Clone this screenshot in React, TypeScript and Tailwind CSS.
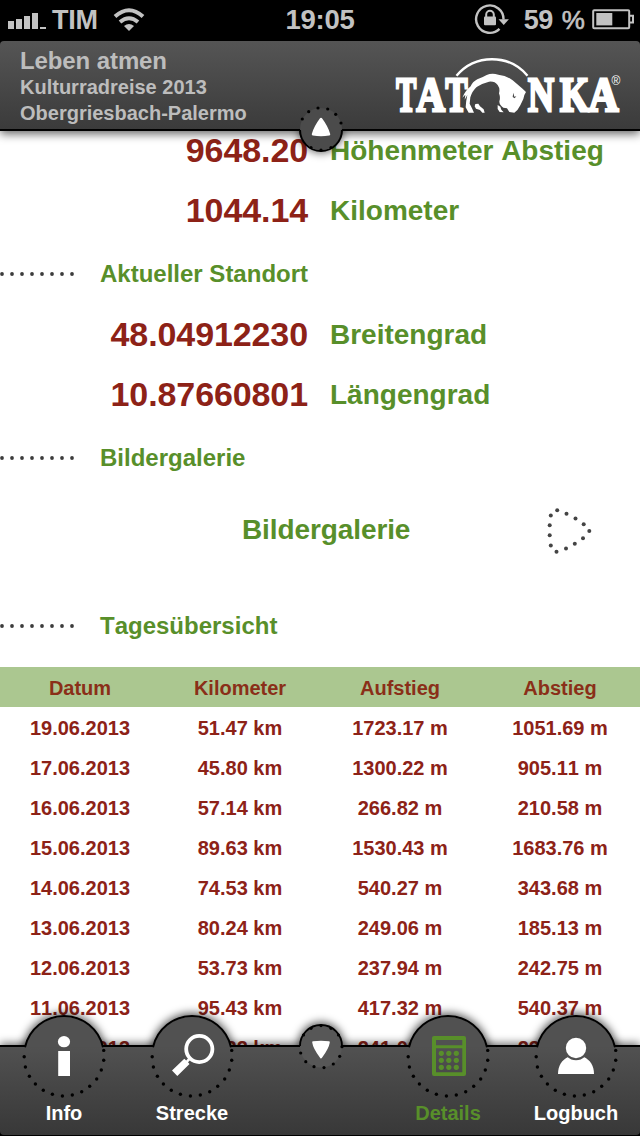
import type { ReactNode } from 'react';

interface DayEntry {
  date: string;
  distance: string;
  ascent: string;
  descent: string;
}

const days: DayEntry[] = [
  { date: '19.06.2013', distance: '51.47 km', ascent: '1723.17 m', descent: '1051.69 m' },
  { date: '17.06.2013', distance: '45.80 km', ascent: '1300.22 m', descent: '905.11 m' },
  { date: '16.06.2013', distance: '57.14 km', ascent: '266.82 m', descent: '210.58 m' },
  { date: '15.06.2013', distance: '89.63 km', ascent: '1530.43 m', descent: '1683.76 m' },
  { date: '14.06.2013', distance: '74.53 km', ascent: '540.27 m', descent: '343.68 m' },
  { date: '13.06.2013', distance: '80.24 km', ascent: '249.06 m', descent: '185.13 m' },
  { date: '12.06.2013', distance: '53.73 km', ascent: '237.94 m', descent: '242.75 m' },
  { date: '11.06.2013', distance: '95.43 km', ascent: '417.32 m', descent: '540.37 m' },
  { date: '10.06.2013', distance: '68.22 km', ascent: '241.03 m', descent: '224.68 m' },
];

type Point = [number, number];

const tabDots: Point[] = [
  [24.2, 51.7], [25.4, 62], [29.4, 71.3], [35.4, 79], [43.3, 85.3], [52.4, 89.3], [62.4, 91],
  [72.3, 90], [81.7, 86.7], [89.7, 81.3], [96.7, 74], [101.3, 65], [103.7, 55.3], [103.7, 45.4],
];

const downDots: Point[] = [
  [44.7, 48], [49.8, 56.7], [58, 61.7], [68, 62.6], [77.3, 59], [83.7, 51.3], [86, 41.7],
  [65, 20.6], [55, 23.3], [47.5, 30], [75, 23.3], [82.5, 30],
];

const upDots: Point[] = [
  [14.3, 22], [20.7, 14.7], [30, 11], [39.7, 12], [47.7, 17.3], [53, 26], [33, 53], [23, 50.6], [43, 50.6],
];

const arrowDots: Point[] = [
  [10.2, 5.2], [3.8, 10.5], [19.5, 8.8], [28.5, 13.5], [36.7, 19.2], [42.3, 25.9], [36, 33.3],
  [27.8, 38.7], [19, 43.4], [9.5, 46.7], [3.8, 40.4], [2.7, 30.3], [2.7, 20.3],
];

function Dots({ points, r, fill = '#000' }: { points: Point[]; r: number; fill?: string }) {
  return (
    <g fill={fill}>
      {points.map(([x, y]) => (
        <circle key={`${x}-${y}`} cx={x} cy={y} r={r} />
      ))}
    </g>
  );
}

function StatusBar() {
  return (
    <div className="grid h-[41px] shrink-0 grid-cols-3 items-center bg-black pb-px text-[28px] leading-none font-bold text-[#c2c2c2]">
      <div className="flex items-center pl-2">
        <svg className="h-[38px] w-[38px]" viewBox="8 1 38 38" fill="currentColor">
          <path d="M8 21h6v8H8zM16 19h6v10h-6zM24 16h6v13h-6zM32 13h6v16h-6zM40 27h6v2h-6z" />
        </svg>
        <span className="ml-[6px] text-[27px] tracking-[-0.3px]">TIM</span>
        <svg className="ml-[15px] h-[38px] w-[32px]" viewBox="114 1 32 38" fill="none" stroke="currentColor" strokeWidth="4">
          <path d="M116 16.5Q130 4 144 16.5" />
          <path d="M121 22Q130 14.5 139 22" />
          <path d="M125 26Q130 22 135 26L130 31Z" fill="currentColor" stroke="none" />
        </svg>
      </div>
      <div className="text-center text-[27.5px] tracking-[-0.3px]">19:05</div>
      <div className="flex items-center justify-end pr-[6px]">
        <svg className="h-[38px] w-[36px]" viewBox="474 1 36 38" fill="none" stroke="currentColor" strokeWidth="2.4">
          <path d="M499.5 28.8A13.7 13.7 0 1 1 503.5 19.5" />
          <path d="M498.5 19.2h10.4l-5.2 5.8z" fill="currentColor" stroke="none" />
          <path d="M486.2 17v-2.4a3.8 3.8 0 0 1 7.6 0V17" strokeWidth="2" />
          <rect x="484" y="16.4" width="12" height="8.8" rx="1" fill="currentColor" stroke="none" />
        </svg>
        <span className="ml-[14px] text-[27px] tracking-[-0.5px]">59</span>
        <span className="ml-[9px] text-[26px] font-normal [-webkit-text-stroke:0.6px_#c2c2c2]">%</span>
        <svg className="ml-[7px] h-[38px] w-[42px]" viewBox="592 1 42 38" fill="none" stroke="currentColor" strokeWidth="2">
          <rect x="593.2" y="10.2" width="36" height="18" rx="1" />
          <path d="M630 15.8h3v6.6h-3" />
          <path d="M596.3 13h16v12.4h-16z" fill="currentColor" stroke="none" />
        </svg>
      </div>
    </div>
  );
}

function Logo() {
  const letters = [
    { char: 'T', x: 6.2, width: 20 },
    { char: 'A', x: 26.5, width: 28.5 },
    { char: 'T', x: 55.5, width: 22 },
    { char: 'N', x: 138, width: 26 },
    { char: 'K', x: 170, width: 29 },
    { char: 'A', x: 198.5, width: 30 },
  ];

  return (
    <svg className="h-[75px] w-[240px]" viewBox="0 0 240 75" fill="#fff" aria-label="Tatonka">
      <g fontFamily="'Liberation Serif', serif" fontWeight="700" fontSize="49.5" stroke="#fff" strokeWidth="3">
        {letters.map((letter) => (
          <text key={letter.x} x={letter.x} y="61.3" textLength={letter.width} lengthAdjust="spacingAndGlyphs">
            {letter.char}
          </text>
        ))}
      </g>
      <text x="221.5" y="35" fontFamily="'Liberation Sans', sans-serif" fontSize="12">
        ®
      </text>
      <path d="M66.5 25.7A46.4 46.4 0 0 1 137.5 25.7" fill="none" stroke="#fff" strokeWidth="2.4" />
      {/* Bison */}
      <g transform="translate(60 5) scale(.3333)">
        <path d="M37 128Q45 108 62 94Q67 81 82 73Q98 67 110 60Q126 53 145 59Q170 61 188 76L216 100Q223 106 228 111Q221 121 220 132L211 151Q204 166 193 173L178 171L171 160L160 158Q148 151 148 139Q152 128 147 115Q151 101 143 90Q134 78 117 80Q96 85 80 96Q66 109 61 127L59 146L66 160L72 173H56L47 157Q48 137 52 120L44 134L46 119Z" />
        <path d="M76 147L85 146L90 154L101 163L104 173H97L90 165L78 161L74 154Z" />
        <path d="M143 150L151 155L154 164L161 172L149 171L143 162Z" />
        <path d="M190 113L193 125L199 124L194 130L188 126Z" fill="#484848" />
      </g>
    </svg>
  );
}

function Header() {
  return (
    <header className="relative z-10 h-[90px] shrink-0 bg-black">
      <div className="flex h-full justify-between rounded-t-[4px] border-b-2 border-black bg-linear-to-b from-[#555555] to-[#3b3b3b] pl-5 shadow-[0_3px_10px_rgba(0,0,0,0.6)]">
        <div className="pt-[7px] text-[20px] leading-[26px] font-bold text-[#bdbdbd]">
          <h1 className="text-[24px] tracking-[-0.1px]">Leben atmen</h1>
          <p>Kulturradreise 2013</p>
          <p>Obergriesbach-Palermo</p>
        </div>
        <div className="pt-[9px] pr-[10px]">
          <Logo />
        </div>
      </div>
      <button className="absolute top-[56px] left-[288px]" aria-label="Nach oben">
        <svg className="h-16 w-16 overflow-visible" viewBox="0 0 64 64">
          <defs>
            <filter id="upShadow" x="-50%" y="-50%" width="200%" height="200%">
              <feGaussianBlur stdDeviation="4" />
            </filter>
            <clipPath id="upClip">
              <rect x="-10" y="34" width="84" height="50" />
            </clipPath>
          </defs>
          <g clipPath="url(#upClip)">
            <circle cx="33" cy="34" r="22" fillOpacity="0.6" filter="url(#upShadow)" />
          </g>
          <circle cx="33" cy="32" r="21" fill="#4b4b4b" />
          <path d="M12 33A21 21 0 0 0 54 33" fill="none" stroke="#000" strokeWidth="2" />
          <Dots points={upDots} r={1.6} />
          <path d="M33 22Q39 30 41 37.3Q33 38.6 25 37.3Q27 30 33 22Z" fill="#fff" stroke="#fff" strokeWidth="2.5" strokeLinejoin="round" />
        </svg>
      </button>
    </header>
  );
}

function Stat({ value, label }: { value: string; label: string }) {
  return (
    <div className="flex h-[60px] gap-[22px] leading-[60px] font-bold">
      <span className="w-[308px] text-right text-[34px] tracking-[-0.1px] text-[#8d2217]">{value}</span>
      <span className="pt-px text-[28px] text-[#588f2a]">{label}</span>
    </div>
  );
}

function SectionTitle({ children }: { children: ReactNode }) {
  return (
    <div className="flex h-16 items-center gap-[22px] pt-[3px]">
      <svg className="h-1 w-[78px]" viewBox="0 0 78 4" fill="#3c3c3c">
        {[2, 12, 22, 32, 42, 52, 62, 72].map((x) => (
          <circle key={x} cx={x} cy="2" r="1.9" />
        ))}
      </svg>
      <h2 className="text-[24px] font-bold text-[#588f2a]">{children}</h2>
    </div>
  );
}

function GalleryLink() {
  return (
    <button className="mb-5 flex h-[84px] w-full items-center pl-[242px] text-[28px] font-bold text-[#588f2a]">
      <span className="w-[305px] text-left tracking-[-0.1px]">Bildergalerie</span>
      <svg className="mt-[2px] h-[52px] w-[46px]" viewBox="0 0 46 52">
        <Dots points={arrowDots} r={2} fill="#444" />
      </svg>
    </button>
  );
}

function DayTable() {
  return (
    <div className="mt-[11px] text-center text-[20px] leading-10 font-bold text-[#8d2217]">
      <div className="grid h-10 grid-cols-4 bg-[#abc790] pt-px text-[#8a2f18]">
        <span>Datum</span>
        <span>Kilometer</span>
        <span>Aufstieg</span>
        <span>Abstieg</span>
      </div>
      {days.map((day) => (
        <div key={day.date} className="grid h-10 grid-cols-4 pt-px">
          <span>{day.date}</span>
          <span>{day.distance}</span>
          <span>{day.ascent}</span>
          <span>{day.descent}</span>
        </div>
      ))}
    </div>
  );
}

function TabItem({ label, active = false, children }: { label: string; active?: boolean; children: ReactNode }) {
  return (
    <button className={`-mt-[42px] flex flex-col items-center ${active ? 'text-[#588f2a]' : 'text-white'}`}>
      <svg className="h-[94px] w-32 overflow-visible" viewBox="0 0 128 94">
        <g clipPath="url(#aboveBar)">
          <circle cx="64" cy="50" r="42" fill="#000" fillOpacity="0.65" filter="url(#tabShadow)" />
        </g>
        <path d="M25.2 42.2A40 40 0 0 1 102.8 42.2Z" fill="#515151" />
        <path d="M25 42.2A40 40 0 0 1 103 42.2" fill="none" stroke="#000" strokeWidth="2" />
        <Dots points={tabDots} r={1.7} />
        <g fill="currentColor">{children}</g>
      </svg>
      <span className="text-[20px] leading-7 font-bold">{label}</span>
    </button>
  );
}

function TabBar() {
  return (
    <nav className="relative z-10 h-[91px] shrink-0 bg-black">
      <svg className="absolute h-0 w-0">
        <defs>
          <filter id="tabShadow" x="-50%" y="-50%" width="200%" height="200%">
            <feGaussianBlur stdDeviation="4" />
          </filter>
          <clipPath id="aboveBar">
            <rect x="0" y="-30" width="128" height="70" />
          </clipPath>
        </defs>
      </svg>
      <div className="grid h-[90px] grid-cols-5 rounded-b-[4px] border-t-2 border-black bg-linear-to-b from-[#515151] to-[#383838] shadow-[0_-2px_9px_rgba(0,0,0,0.55)]">
        <TabItem label="Info">
          <ellipse cx="64" cy="36.7" rx="6.1" ry="5.6" />
          <path d="M58.2 46h11.8v25H58.2z" />
        </TabItem>
        <TabItem label="Strecke">
          <circle cx="71.3" cy="44" r="13.1" fill="none" stroke="currentColor" strokeWidth="3.8" />
          <path d="M56.3 53.7L58.2 55.4L61 52.3L63 54.3L60 57.2L61.5 59L49.3 71L44 65.4Z" />
        </TabItem>
        <button className="-mt-[42px] flex flex-col items-center" aria-label="Nach unten">
          <svg className="h-[94px] w-32" viewBox="0 0 128 94">
            <g clipPath="url(#aboveBar)">
              <circle cx="65" cy="40" r="23" fillOpacity="0.65" filter="url(#tabShadow)" />
            </g>
            <circle cx="65" cy="41.5" r="21" fill="#575757" />
            <path d="M44 41A21 21 0 0 1 86 41" fill="none" stroke="#000" strokeWidth="1.8" />
            <Dots points={downDots} r={1.6} />
            <path d="M57.2 37.3Q65 36.2 72.8 37.3Q72 43 65 52.4Q58 43 57.2 37.3Z" fill="#fff" stroke="#fff" strokeWidth="2" strokeLinejoin="round" />
          </svg>
        </button>
        <TabItem label="Details" active>
          <path
            fillRule="evenodd"
            d="M50 31h30a2 2 0 0 1 2 2v36a2 2 0 0 1-2 2H50a2 2 0 0 1-2-2V33a2 2 0 0 1 2-2zM52 35v5.3h26.3v-5.3zM52 43.3v24h26.3v-24z"
          />
          {[48.3, 55.3, 62.3].map((y) =>
            [57.3, 64.8, 72.3].map((x) => <circle key={`${x}-${y}`} cx={x} cy={y} r="2.6" />)
          )}
        </TabItem>
        <TabItem label="Logbuch">
          <path d="M46 69C46 61 50 55 55.5 52.3H72.5C78 55 82 61 82 69Z" />
          <circle cx="64" cy="43" r="11.2" stroke="#505050" strokeWidth="2" />
        </TabItem>
      </div>
    </nav>
  );
}

export default function App() {
  return (
    <div className="flex h-[1136px] w-[640px] flex-col overflow-hidden bg-white font-['Liberation_Sans',Arial,sans-serif] [font-kerning:none]">
      <StatusBar />
      <Header />
      <main className="-mt-[11px] min-h-0 flex-1 overflow-hidden">
        <Stat value="9648.20" label="Höhenmeter Abstieg" />
        <Stat value="1044.14" label="Kilometer" />
        <SectionTitle>Aktueller Standort</SectionTitle>
        <Stat value="48.04912230" label="Breitengrad" />
        <Stat value="10.87660801" label="Längengrad" />
        <SectionTitle>Bildergalerie</SectionTitle>
        <GalleryLink />
        <SectionTitle>Tagesübersicht</SectionTitle>
        <DayTable />
      </main>
      <TabBar />
    </div>
  );
}
